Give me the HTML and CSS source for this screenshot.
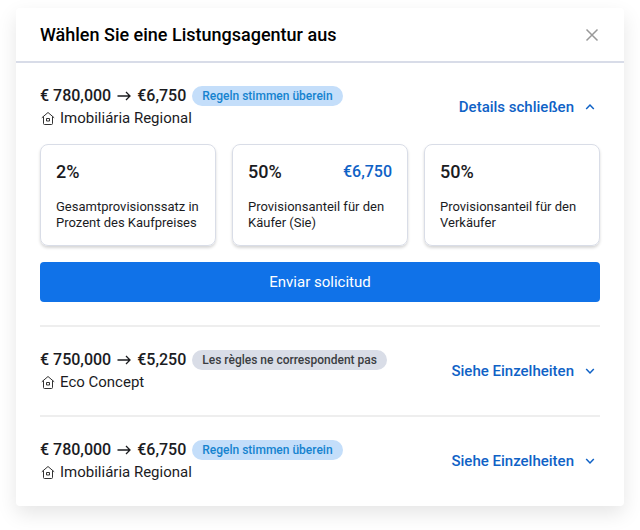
FILE: index.html
```html
<!doctype html>
<html lang="de">
  <head>
    <meta charset="utf-8" />
    <meta name="viewport" content="width=device-width" />
    <title>Wählen Sie eine Listungsagentur aus</title>
    <link rel="stylesheet" href="styles.css">
  </head>
  <body>
    <svg class="sprite" aria-hidden="true">
      <symbol id="arrow" viewBox="0 0 14 10">
        <path d="M0.5 5H13M9 1l4 4-4 4" />
      </symbol>
      <symbol id="house" viewBox="0 0 16 16">
        <path d="M1.8 7.8 8 2.5l6.2 5.3M3.5 6.5v7q0 1 1 1h7q1 0 1-1v-7" />
        <rect x="6.5" y="8.5" width="3" height="2.5" />
      </symbol>
      <symbol id="chevron" viewBox="0 0 20 20">
        <path d="m6.2 8 3.8 4L13.8 8" />
      </symbol>
    </svg>

    <main class="modal">
      <header class="modal-header">
        <h1>Wählen Sie eine Listungsagentur aus</h1>
        <button class="close" type="button" aria-label="Schließen">
          <svg viewBox="0 0 16 16"><path d="M2.5 2.5l11 11M13.5 2.5l-11 11" /></svg>
        </button>
      </header>

      <section class="agency">
        <div class="summary">
          <div class="info">
            <div class="price">
              <span>€ 780,000</span>
              <svg class="arrow"><use href="#arrow" /></svg>
              <span>€6,750</span>
              <span class="badge match">Regeln stimmen überein</span>
            </div>
            <div class="name">
              <svg class="house"><use href="#house" /></svg>
              <span>Imobiliária Regional</span>
            </div>
          </div>
          <button class="toggle" type="button" aria-expanded="true">
            Details schließen
            <svg class="chevron"><use href="#chevron" /></svg>
          </button>
        </div>
        <div class="rates">
          <div class="rate">
            <div class="rate-value"><strong>2%</strong></div>
            <p>Gesamtprovisionssatz in Prozent des Kaufpreises</p>
          </div>
          <div class="rate">
            <div class="rate-value"><strong>50%</strong><span class="amount">€6,750</span></div>
            <p>Provisionsanteil für den Käufer (Sie)</p>
          </div>
          <div class="rate">
            <div class="rate-value"><strong>50%</strong></div>
            <p>Provisionsanteil für den Verkäufer</p>
          </div>
        </div>
        <button class="submit" type="button">Enviar solicitud</button>
      </section>

      <section class="agency">
        <div class="summary">
          <div class="info">
            <div class="price">
              <span>€ 750,000</span>
              <svg class="arrow"><use href="#arrow" /></svg>
              <span>€5,250</span>
              <span class="badge">Les règles ne correspondent pas</span>
            </div>
            <div class="name">
              <svg class="house"><use href="#house" /></svg>
              <span>Eco Concept</span>
            </div>
          </div>
          <button class="toggle" type="button" aria-expanded="false">
            Siehe Einzelheiten
            <svg class="chevron"><use href="#chevron" /></svg>
          </button>
        </div>
      </section>

      <section class="agency">
        <div class="summary">
          <div class="info">
            <div class="price">
              <span>€ 780,000</span>
              <svg class="arrow"><use href="#arrow" /></svg>
              <span>€6,750</span>
              <span class="badge match">Regeln stimmen überein</span>
            </div>
            <div class="name">
              <svg class="house"><use href="#house" /></svg>
              <span>Imobiliária Regional</span>
            </div>
          </div>
          <button class="toggle" type="button" aria-expanded="false">
            Siehe Einzelheiten
            <svg class="chevron"><use href="#chevron" /></svg>
          </button>
        </div>
      </section>
    </main>
  </body>
</html>
```
FILE: styles.css
```css
*, *::before, *::after {
  box-sizing: border-box;
}

body {
  margin: 0;
  padding: 8px 16px 24px;
  background: #fff;
  color: #1b1c1f;
  font: 15px/20px Roboto, "Liberation Sans", sans-serif;
}

h1, p {
  margin: 0;
}

button {
  border: 0;
  padding: 0;
  background: none;
  font: inherit;
  cursor: pointer;
}

svg {
  flex: none;
  fill: none;
  stroke: currentColor;
}

.sprite {
  display: none;
}

.modal {
  border-radius: 4px;
  box-shadow: 0 8px 20px rgba(0, 0, 0, 0.1);
}

.modal-header {
  display: flex;
  align-items: center;
  justify-content: space-between;
  height: 55px;
  padding: 1px 24px 0;
  border-bottom: 2px solid #d8dce8;
}

.modal-header h1 {
  color: #000;
  font-size: 18px;
  font-weight: 500;
}

.close {
  display: flex;
  color: #999;
}

.close svg {
  width: 16px;
  height: 16px;
  stroke-width: 1.5;
}

.agency {
  display: grid;
  gap: 16px;
  margin: 0 24px;
  padding: 23px 0;
  border-bottom: 2px solid #eee;
}

.agency:last-child {
  padding-bottom: 24px;
  border-bottom: 0;
}

.summary {
  display: flex;
  align-items: center;
  justify-content: space-between;
}

.info {
  display: grid;
  gap: 2px;
}

.price, .name {
  display: flex;
  align-items: center;
  gap: 6px;
}

.price {
  font-size: 16px;
  font-weight: 500;
}

.name {
  gap: 4px;
}

.arrow {
  width: 14px;
  height: 10px;
  stroke-width: 1.3;
}

.house {
  width: 16px;
  height: 16px;
  color: #333;
  stroke-linejoin: round;
}

.badge {
  padding: 0 10px;
  border-radius: 10px;
  background: #d9dde7;
  color: #3b3d42;
  font-size: 12px;
}

.badge.match {
  background: #c4defa;
  color: #1583cf;
}

.toggle {
  display: flex;
  align-items: center;
  gap: 6px;
  color: #0f62c6;
  font-weight: 500;
}

.chevron {
  width: 20px;
  height: 20px;
  stroke-width: 1.5;
}

.toggle[aria-expanded="true"] .chevron {
  transform: rotate(180deg);
}

.rates {
  display: grid;
  grid-template-columns: repeat(3, 1fr);
  gap: 16px;
}

.rate {
  display: grid;
  gap: 17px;
  padding: 17px 15px 14px;
  border: 1px solid #d9dde7;
  border-radius: 8px;
  box-shadow: 0 2px 3px rgba(0, 0, 0, 0.16);
}

.rate-value {
  display: flex;
  align-items: center;
  justify-content: space-between;
}

.rate strong {
  font-size: 18px;
  font-weight: 500;
}

.rate p {
  font-size: 13px;
  line-height: 16px;
}

.amount {
  font-size: 16px;
  color: #0f62c6;
  font-weight: 500;
}

.submit {
  height: 40px;
  border-radius: 4px;
  background: #1072e8;
  color: #fff;
}
```
